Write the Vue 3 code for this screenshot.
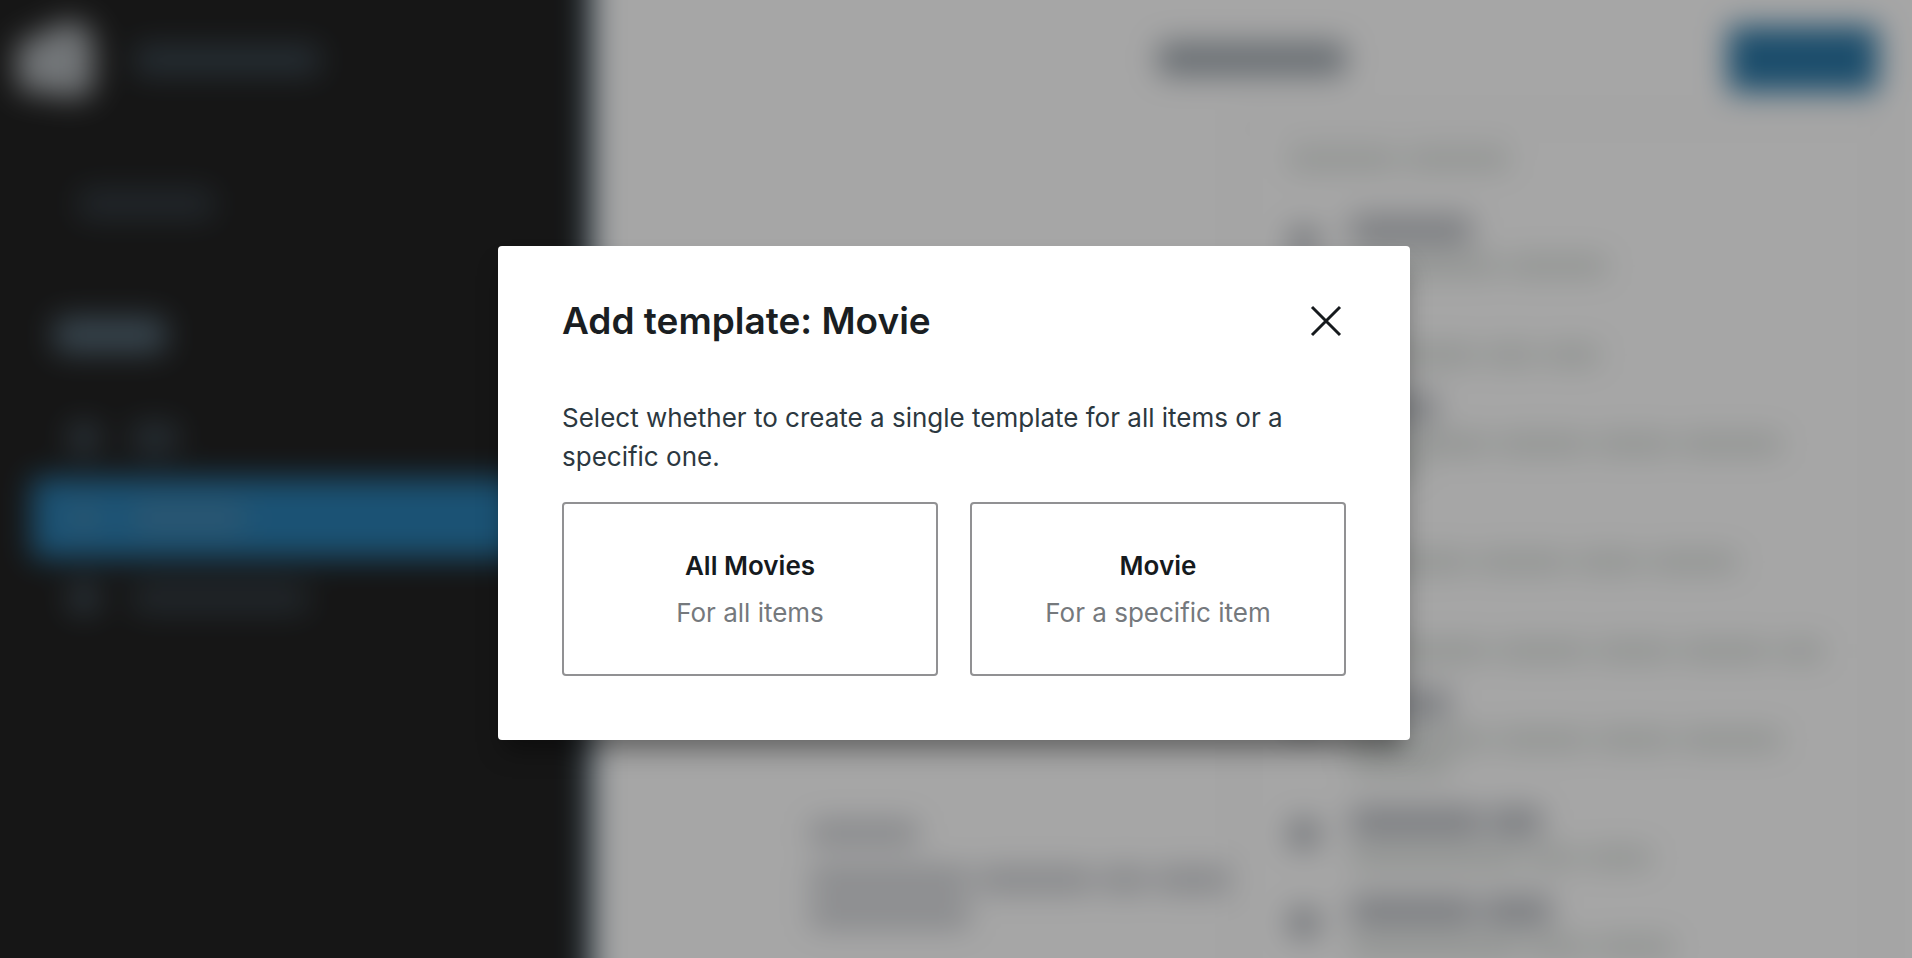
<script setup>
import { ref } from 'vue'

const open = ref(true)

const choices = [
  { title: 'All Movies', hint: 'For all items' },
  { title: 'Movie', hint: 'For a specific item' }
]

// Widths, in pixels, of the placeholder words behind the dialog.
const templates = [
  { title: [122], lines: [[150, 100]] },
  { title: [36], lines: [[128, 50, 56]] },
  { title: [86], lines: [[140, 90, 76, 102], [70]] },
  { title: [36], lines: [[120, 90, 66, 88]] },
  { title: [36], lines: [[140, 90, 76, 90, 46]] },
  { title: [100], lines: [[140, 90, 76, 102], [100]] },
  { title: [132, 52], lines: [[170, 50, 66]] },
  { title: [126, 68], lines: [[170, 60, 78]] }
]
</script>

<template>
  <div class="screen">
    <div class="editor" aria-hidden="true">
      <aside class="sidebar">
        <div class="brand">
          <svg class="logo" viewBox="0 0 72 72"><path d="M0 22 46 0 66 4 72 20V62L60 72 2 64Z" /></svg>
          <span class="bar site"></span>
        </div>
        <span class="bar crumb"></span>
        <span class="bar section"></span>
        <ul class="nav">
          <li><span class="dot"></span><span class="bar short"></span></li>
          <li class="active"><span class="dot"></span><span class="bar medium"></span></li>
          <li><span class="dot"></span><span class="bar long"></span></li>
        </ul>
      </aside>
      <main class="main">
        <header class="top">
          <span class="heading"></span>
          <span class="add"></span>
        </header>
        <div class="body">
          <div class="canvas">
            <div class="note">
              <span class="ink w1"></span>
              <div class="words">
                <span class="ink w2"></span><span class="ink w3"></span><span class="ink w4"></span><span class="ink w5"></span>
              </div>
              <span class="ink w2"></span>
            </div>
          </div>
          <div class="panel">
            <div class="words label"><span class="faint l1"></span><span class="faint l2"></span></div>
            <div v-for="(t, i) in templates" :key="i" class="item">
              <span class="glyph"></span>
              <div class="text">
                <div class="words strong">
                  <span v-for="(w, j) in t.title" :key="j" class="ink" :style="{ width: w + 'px' }"></span>
                </div>
                <div v-for="(line, k) in t.lines" :key="k" class="words">
                  <span v-for="(w, j) in line" :key="j" class="faint" :style="{ width: w + 'px' }"></span>
                </div>
              </div>
            </div>
          </div>
        </div>
      </main>
    </div>

    <div v-if="open" class="overlay">
      <section class="dialog" role="dialog" aria-modal="true" aria-labelledby="dialog-title">
        <header class="dialog-head">
          <h1 id="dialog-title">Add template: Movie</h1>
          <button class="close" type="button" aria-label="Close" @click="open = false">
            <svg viewBox="0 0 32 32"><path d="M2 2 30 30M30 2 2 30" /></svg>
          </button>
        </header>
        <p class="lead">Select whether to create a single template for all items or a specific one.</p>
        <div class="choices">
          <button v-for="c in choices" :key="c.title" class="choice" type="button">
            <span class="name">{{ c.title }}</span>
            <span class="hint">{{ c.hint }}</span>
          </button>
        </div>
      </section>
    </div>
  </div>
</template>

<style>
body {
  margin: 0;
}
</style>

<style scoped>
* {
  box-sizing: border-box;
}

.screen {
  display: grid;
  position: relative;
  height: 100vh;
  overflow: hidden;
  font-family: Inter, "Liberation Sans", sans-serif;
}

/* Bleeds past the window by 48px a side, so that the blur has no pale rim. */
.editor {
  display: flex;
  height: calc(100vh + 96px);
  margin: -48px;
  overflow: hidden;
  filter: blur(15px);
}

.sidebar {
  flex: 0 0 calc((100% - 96px) * 0.31 + 48px);
  padding: 72px 0 0 48px;
  border-right: 10px solid #3a566a;
  background: #222;
}

.brand {
  display: flex;
  align-items: center;
  gap: 40px;
  height: 72px;
  padding-left: 16px;
}

.logo {
  width: 78px;
  height: 78px;
  fill: #b0b5b9;
}

.bar {
  display: block;
  height: 30px;
  border-radius: 8px;
  background: #3b4851;
}

.site {
  width: 186px;
}

.crumb {
  width: 136px;
  margin: 93px 0 0 78px;
  background: #343d44;
}

.section {
  width: 112px;
  height: 36px;
  margin: 98px 0 0 54px;
  background: #566b79;
}

.nav {
  margin: 45px 54px 0 32px;
  padding: 0;
  list-style: none;
}

.nav li {
  display: flex;
  align-items: center;
  gap: 32px;
  height: 80px;
  padding-left: 36px;
  border-radius: 4px;
}

.nav .active {
  background: #2a7fb3;
}

.dot {
  width: 32px;
  height: 32px;
  border-radius: 50%;
  background: #44545f;
}

.active .dot,
.active .bar {
  background: #4585ad;
}

.short {
  width: 46px;
}

.medium {
  width: 112px;
}

.long {
  width: 176px;
  background: #343e45;
}

.main {
  flex: 1;
  min-width: 0;
  padding: 48px 48px 0 0;
  background: #fff;
}

.top {
  display: grid;
  grid-template-columns: 1fr auto 1fr;
  align-items: center;
  height: 118px;
  padding: 0 34px;
}

.heading {
  grid-column: 2;
  width: 188px;
  height: 34px;
  border-radius: 8px;
  background: #a2aab1;
}

.add {
  justify-self: end;
  width: 150px;
  height: 66px;
  border-radius: 4px;
  background: #2b77a6;
}

.body {
  display: flex;
}

.canvas {
  flex: 1;
  padding: 702px 0 0 217px;
}

.note {
  display: grid;
  gap: 10px;
}

.words {
  display: flex;
  align-items: center;
  gap: 8px;
  height: 24px;
}

.ink,
.faint {
  flex: none;
  height: 26px;
  border-radius: 6px;
  background: #cfd1d5;
}

.faint {
  height: 22px;
  background: #e0e4e1;
}

.w1 {
  width: 108px;
  margin-bottom: 12px;
}

.w2 {
  width: 160px;
}

.w3 {
  width: 116px;
}

.w4 {
  width: 46px;
}

.w5 {
  width: 74px;
}

.panel {
  width: 644px;
  height: 980px;
  margin-right: 30px;
  padding: 28px 0 0 48px;
  border: 2px solid #dcdcdc;
}

.label {
  height: 22px;
  margin-bottom: 48px;
}

.l1 {
  width: 110px;
}

.l2 {
  width: 104px;
}

.item {
  display: flex;
  gap: 30px;
  height: 89px;
}

.item:nth-child(3n + 4) {
  height: 118px;
}

.glyph {
  flex: none;
  width: 32px;
  height: 32px;
  margin-top: 8px;
  border-radius: 50%;
  background: #afb3b9;
}

.strong {
  margin-bottom: 12px;
}

.strong .ink {
  height: 30px;
  background: #bfc2c7;
}

.overlay {
  position: absolute;
  inset: 0;
  display: grid;
  place-items: center;
  padding: 28px 4px 0 0;
  background: rgba(0, 0, 0, 0.35);
}

.dialog {
  width: 912px;
  max-width: calc(100% - 32px);
  padding: 48px 64px 64px;
  border-radius: 4px;
  background: #fff;
  box-shadow: 0 16px 24px -6px rgba(0, 0, 0, 0.4);
}

.dialog-head {
  display: flex;
  align-items: center;
  justify-content: space-between;
  margin-bottom: 50px;
}

h1 {
  margin: 0;
  color: #1a1e22;
  font-size: 37px;
  font-weight: 600;
  line-height: 54px;
}

.close {
  display: grid;
  place-items: center;
  width: 48px;
  height: 48px;
  margin-right: -4px;
  padding: 0;
  border: 0;
  background: none;
  cursor: pointer;
}

.close svg {
  width: 32px;
  height: 32px;
  fill: none;
  stroke: #161a1d;
  stroke-width: 3;
}

.lead {
  margin: 0 0 26px;
  color: #2c3840;
  font-size: 26px;
  line-height: 39px;
}

.choices {
  display: grid;
  grid-template-columns: 1fr 1fr;
  gap: 32px;
}

.choice {
  display: flex;
  flex-direction: column;
  align-items: center;
  gap: 8px;
  padding: 42px 16px;
  border: 2px solid #919193;
  border-radius: 4px;
  background: #fff;
  font: inherit;
  font-size: 26px;
  line-height: 39px;
  cursor: pointer;
}

.name {
  color: #161a1d;
  font-weight: 600;
}

.hint {
  color: #75797d;
}
</style>
